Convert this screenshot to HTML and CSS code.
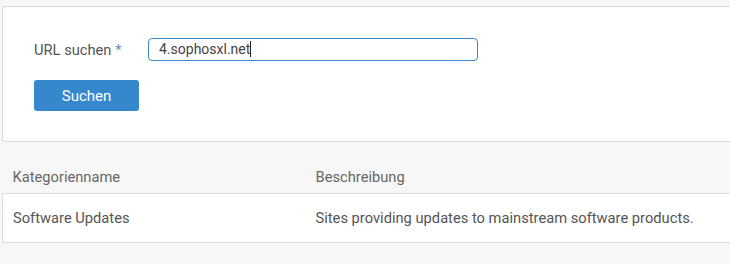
FILE: index.html
```html
<!DOCTYPE html>
<html lang="de">
<head>
    <meta charset="UTF-8">
    <title>URL suchen</title>
    <link rel="stylesheet" href="styles.css">
</head>
<body>
    <div class="panel">
        <div class="form-row">
            <label class="form-label" for="url">URL suchen <span class="req">*</span></label>
            <div class="url-input">4.sophosxl.net<span class="caret"></span></div>
        </div>
        <button class="btn-primary">Suchen</button>
    </div>

    <table class="result-table">
        <thead>
            <tr>
                <th class="col-name">Kategorienname</th>
                <th>Beschreibung</th>
            </tr>
        </thead>
        <tbody>
            <tr>
                <td class="col-name">Software Updates</td>
                <td>Sites providing updates to mainstream software products.</td>
            </tr>
        </tbody>
    </table>
</body>
</html>
```

FILE: styles.css
```css
body {
    margin: 0;
    padding: 0;
    background-color: #f7f7f7;
    font-family: Roboto, "Liberation Sans", Arial, sans-serif;
    font-size: 14.7px;
    color: #555;
}

.panel {
    margin: 6px 0 0 2px;
    padding: 31px 0 30px 31px;
    background-color: #fff;
    border: 1px solid #ddd;
    border-right: none;
    border-radius: 3px 0 0 3px;
}

.form-row {
    display: flex;
    align-items: center;
}

.form-label {
    width: 114px;
    color: #555;
}

.req {
    color: #6b8fb3;
}

.url-input {
    box-sizing: border-box;
    width: 330px;
    height: 23px;
    padding: 0 10px;
    line-height: 21px;
    font-size: 14px;
    border: 1px solid #3a86c8;
    border-radius: 4px;
    color: #444;
}

.caret {
    display: inline-block;
    width: 1px;
    height: 16px;
    vertical-align: -3px;
    background-color: #222;
}

.btn-primary {
    display: block;
    margin-top: 19px;
    width: 105px;
    height: 31px;
    border: none;
    border-radius: 3px;
    background-color: #3688cd;
    color: #fff;
    font-family: inherit;
    font-size: 15px;
}

/* results */
.result-table {
    margin: 17px 0 0 2px;
    width: calc(100% - 2px);
    border-collapse: collapse;
    table-layout: fixed;
}

.result-table th,
.result-table td {
    text-align: left;
    padding: 8px 10px 6px;
    line-height: 20px;
}

.result-table th {
    font-weight: normal;
    color: #666;
    border-bottom: 1px solid #ddd;
}

.result-table td {
    padding-top: 14px;
    padding-bottom: 14px;
    background-color: #fff;
}

.result-table tbody tr {
    border: 1px solid #ddd;
    border-right: none;
}

.col-name {
    width: 283px;
}
```
